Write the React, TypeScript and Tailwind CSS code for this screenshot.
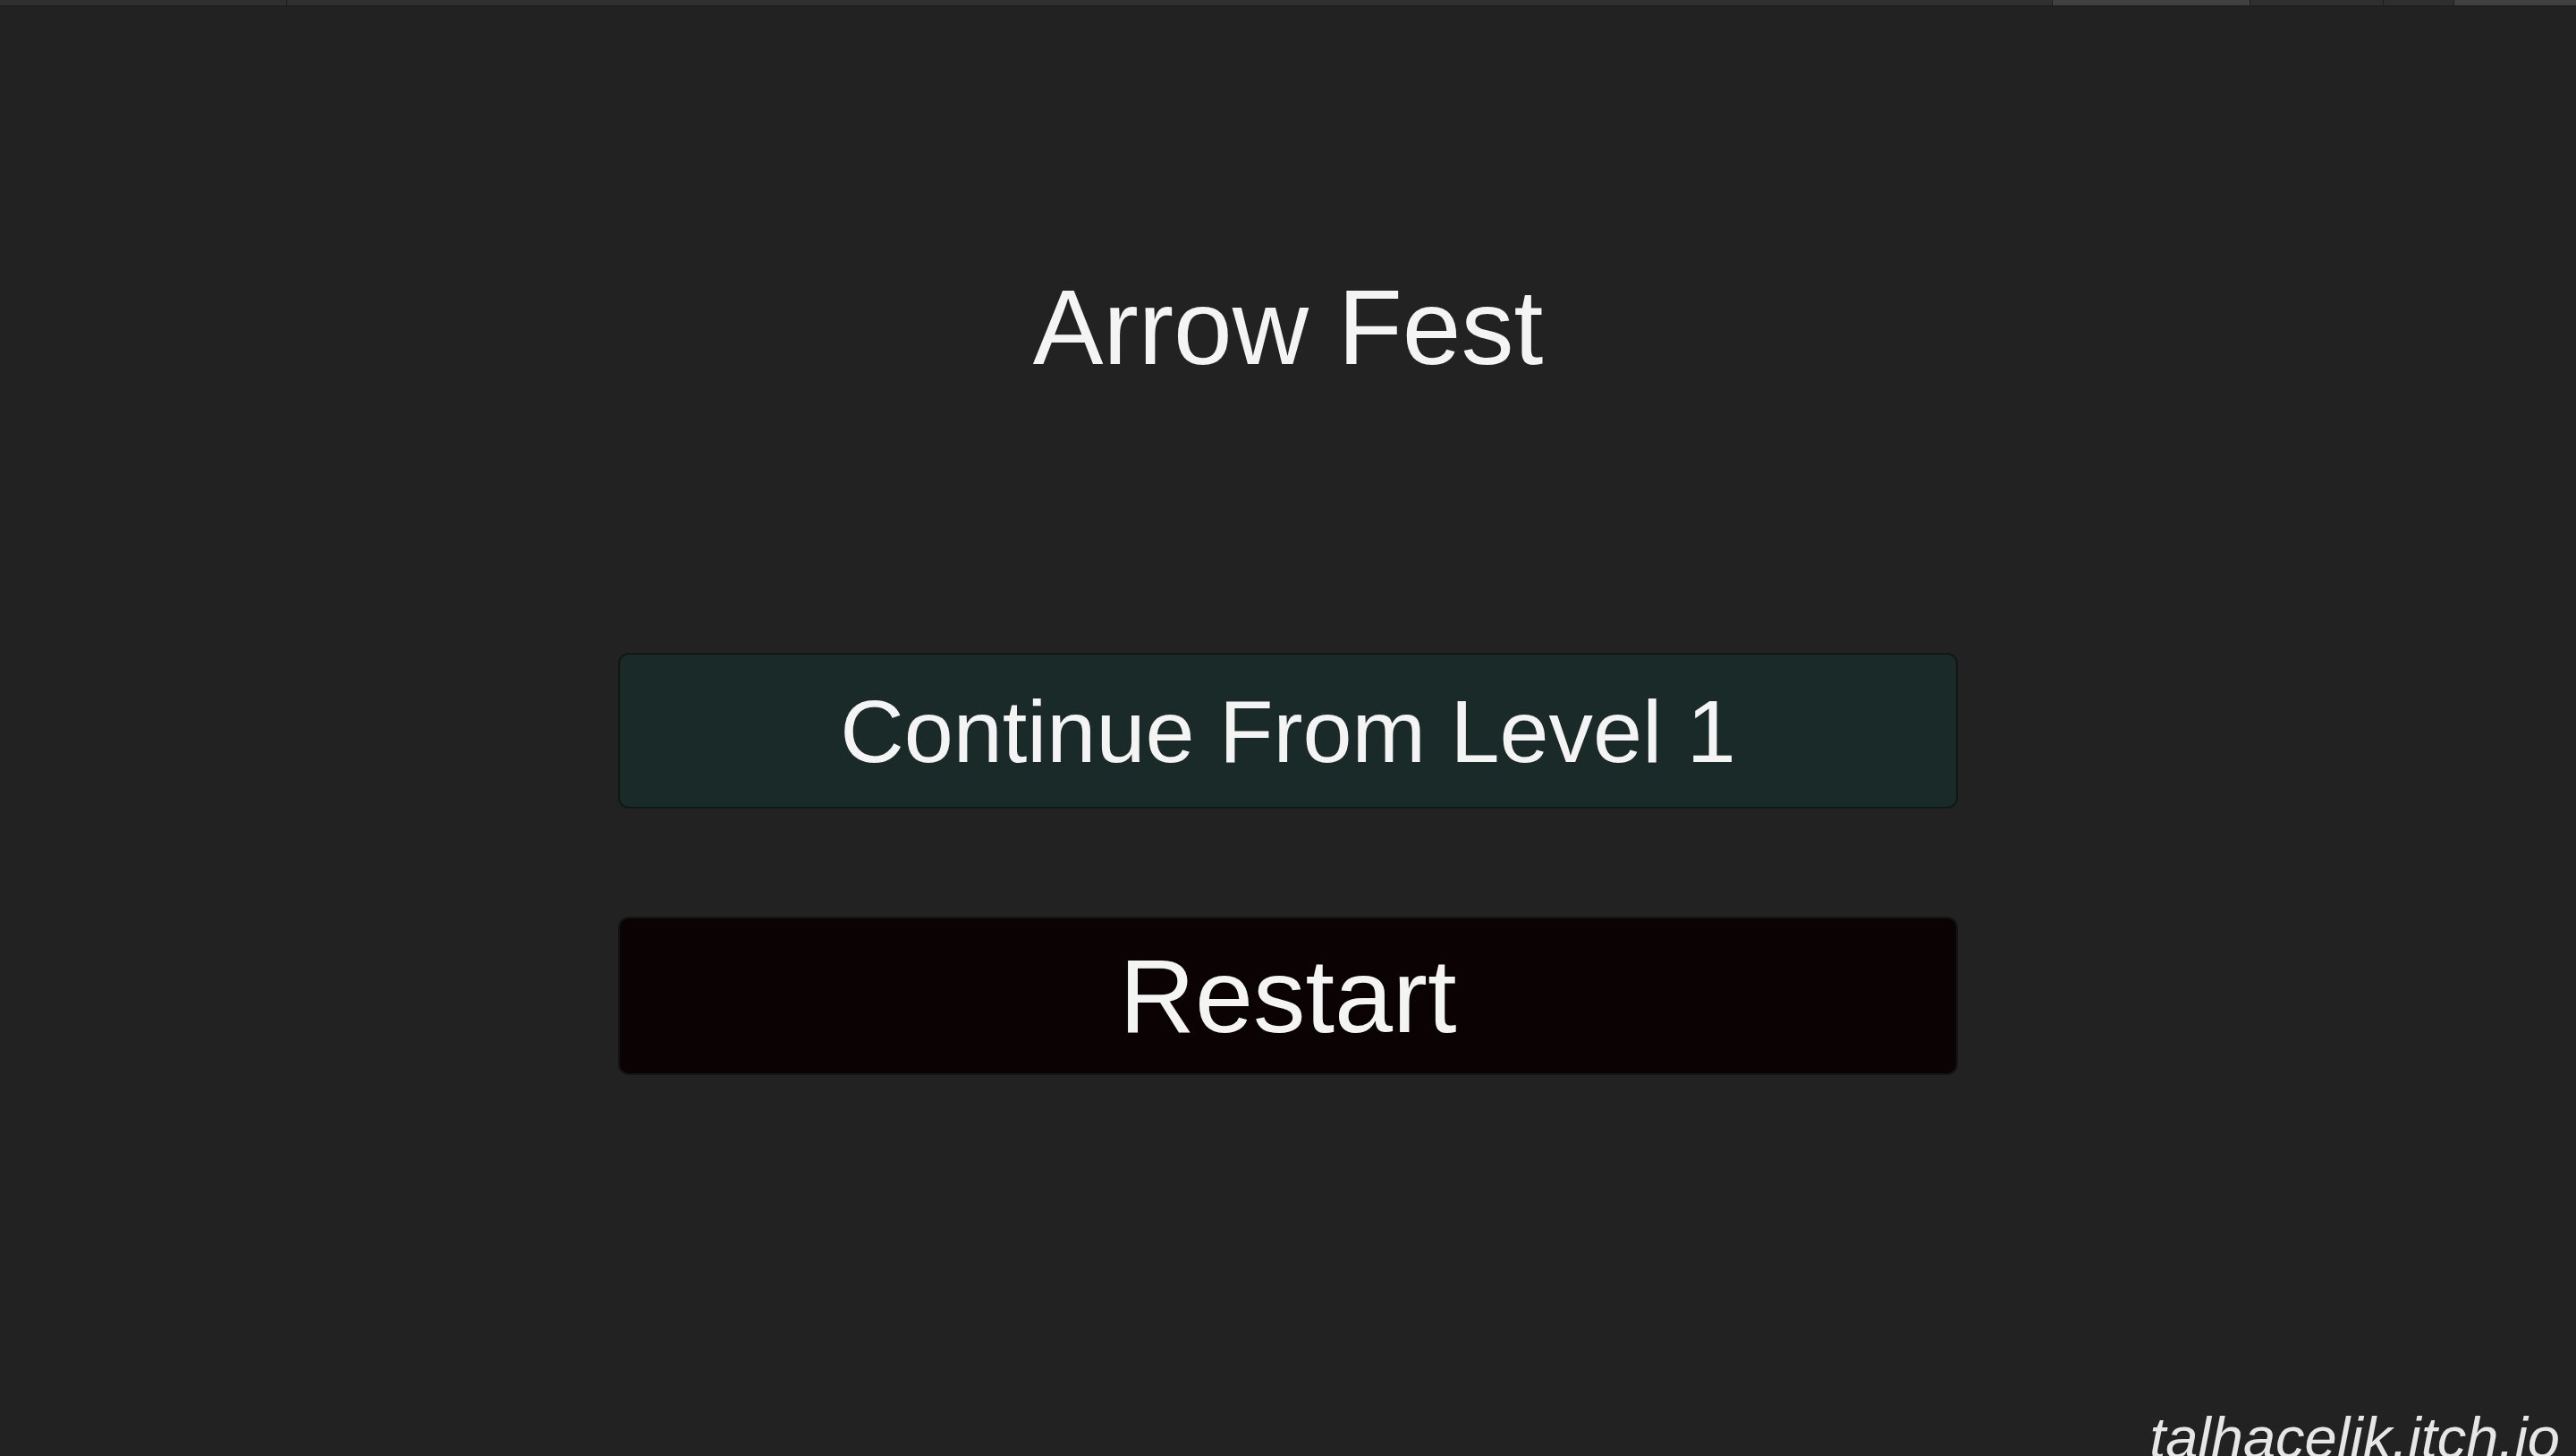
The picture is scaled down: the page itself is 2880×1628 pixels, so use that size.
const tabs = [
  { w: 'w-[320px]', bg: 'bg-[#2f2f2f]' },
  { w: 'flex-1', bg: 'bg-[#303030]' },
  { w: 'w-[220px]', bg: 'bg-[#414141]' },
  { w: 'w-[148px]', bg: 'bg-[#2f2f2f]' },
  { w: 'w-[78px]', bg: 'bg-[#2f2f2f]' },
  { w: 'w-[136px]', bg: 'bg-[#414141]' },
];

export default function App() {
  return (
    <div
      className="relative h-[1628px] w-full overflow-hidden bg-[#222222] text-[#f4f4f4]"
      style={{ fontFamily: '"Liberation Sans", Arial, sans-serif' }}
    >
      {/* top strip */}
      <div className="flex h-[7px] gap-px border-b border-[#1b1b1b] bg-[#1e1e1e]">
        {tabs.map((t, i) => (
          <div key={i} className={`${t.w} ${t.bg} h-full`} />
        ))}
      </div>

      <div className="flex flex-col items-center">
        <h1 className="mt-[300px] text-[118px] leading-none font-normal">Arrow Fest</h1>

        <button className="mt-[305px] flex h-[174px] w-[1498px] items-center justify-center rounded-[12px] border-2 border-[#0f1817] bg-[#1a2a28] text-[99px] leading-none text-[#f4f4f4]">
          Continue From Level 1
        </button>

        <button className="mt-[121px] flex h-[177px] w-[1498px] items-center justify-center rounded-[12px] border-2 border-[#141414] bg-[#0a0203] text-[117px] leading-none text-[#f4f4f4]">
          Restart
        </button>
      </div>

      <div className="absolute right-[18px] bottom-[-12px] text-[65px] leading-none text-[#e6e6e6] italic">
        talhacelik.itch.io
      </div>
    </div>
  );
}
